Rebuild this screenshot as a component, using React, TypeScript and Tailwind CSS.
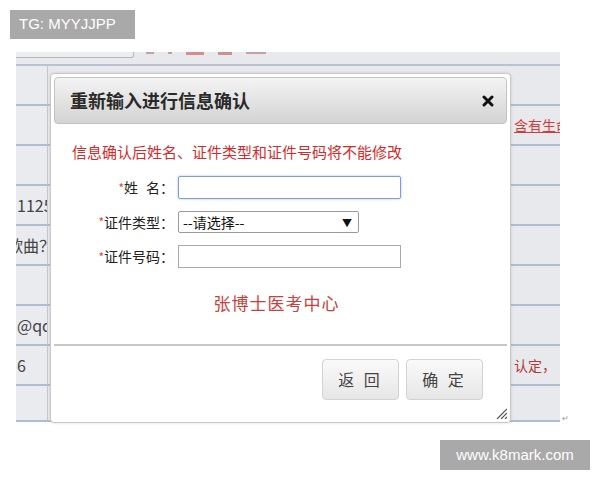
import React from "react";

const font = { fontFamily: '"Noto Sans CJK SC", "Liberation Sans", sans-serif' };

type Row = { h: string; left?: string; leftShift?: boolean; right?: string; rightLink?: boolean };

const rows: Row[] = [
  { h: "h-[40px]" },
  { h: "h-[40px]", right: "含有生命", rightLink: true },
  { h: "h-[40px]" },
  { h: "h-[40px]", left: "11253" },
  { h: "h-[40px]", left: "歌曲？", leftShift: true },
  { h: "h-[40px]" },
  { h: "h-[40px]", left: "@qq" },
  { h: "h-[40px]", left: "6", right: "认定，" },
  { h: "h-[36px]" },
];

function BackgroundSheet() {
  return (
    <div className="flex flex-col bg-[#e7e9ed]">
      {/* cropped row above the table */}
      <div className="flex h-[14px] border-b-2 border-[#b9c3d0]">
        <div className="h-[6px] w-[118px] rounded-br-[3px] border-b border-r border-[#b8b8b8] bg-[#eceef1]" />
        <div className="ml-[12px] flex gap-[14px]">
          <span className="h-[2px] w-[8px] bg-[#c9a0a0]" />
          <span className="h-[2px] w-[4px] bg-[#c9a0a0]" />
          <span className="h-[3px] w-[18px] bg-[#d88c8c]" />
          <span className="h-[3px] w-[14px] bg-[#d08f8f]" />
          <span className="h-[2px] w-[20px] bg-[#c9a0a0]" />
        </div>
      </div>
      {rows.map((r, i) => (
        <div key={i} className={`flex ${r.h} border-b-2 border-[#aebdd0]`}>
          <div className="flex w-[32px] items-center overflow-hidden whitespace-nowrap border-r border-[#c4c8ce] bg-[#eaebee] text-[16px] text-[#444]" style={font}>
            {r.left && <span className={r.leftShift ? "ml-[-9px]" : "ml-[1px]"}>{r.left}</span>}
          </div>
          <div className="flex-1" />
          <div className="flex w-[47px] items-center overflow-hidden whitespace-nowrap pl-[1px] text-[14px] text-[#b2393b]" style={font}>
            {r.right && <span className={r.rightLink ? "underline text-[#d43b3b]" : ""}>{r.right}</span>}
          </div>
        </div>
      ))}
    </div>
  );
}

function Label({ children }: { children: React.ReactNode }) {
  return (
    <div className="flex items-center justify-end text-[14px] text-[#222]" style={font}>
      <span className="text-[12px] text-[#e23b3b]">*</span>
      {children}
      <span>：</span>
    </div>
  );
}

function Dialog() {
  return (
    <div className="absolute left-[34px] top-[21px] flex h-[350px] w-[461px] flex-col rounded-[4px] border border-[#c9c9c9] bg-white p-[3px] shadow-[0_0_3px_rgba(0,0,0,0.15)]">
      <div className="flex h-[47px] items-center justify-between rounded-[4px] border border-[#c2c2c2] bg-gradient-to-b from-[#f4f4f4] to-[#d3d3d3] pl-[15px] pr-[12px]">
        <span className="text-[18px] font-bold text-[#2a2a2a]" style={font}>重新输入进行信息确认</span>
        <svg width="12" height="12" viewBox="0 0 12 12">
          <path d="M2 2 L10 10 M10 2 L2 10" stroke="#111" strokeWidth="3" strokeLinecap="round" />
        </svg>
      </div>

      <div className="pl-[18px] pt-[18px] text-[15px] leading-[19px] text-[#d42a2a]" style={font}>
        信息确认后姓名、证件类型和证件号码将不能修改
      </div>

      <div className="mt-[15px] grid grid-cols-[120px_1fr] gap-x-[4px] gap-y-[12px]">
        <Label>
          <span>姓</span>
          <span className="ml-[8px]">名</span>
        </Label>
        <div className="h-[23px] w-[223px] rounded-[2px] border border-[#7f9fd3] shadow-[0_0_2px_rgba(80,120,200,0.6)]" />
        <Label>
          <span>证件类型</span>
        </Label>
        <div className="flex h-[22px] w-[181px] items-center justify-between rounded-[2px] border border-[#9a9a9a] pl-[4px] pr-[6px] text-[14px] text-[#111]" style={font}>
          <span>--请选择--</span>
          <span className="text-[10px]">▼</span>
        </div>
        <Label>
          <span>证件号码</span>
        </Label>
        <div className="h-[23px] w-[223px] border border-[#a9a9a9]" />
      </div>

      <div className="mt-[22px] pr-[8px] text-center text-[17px] text-[#c8413e]" style={font}>
        <span className="tracking-[1px]">张博士医考中心</span>
      </div>

      <div className="mt-[28px] border-t-2 border-[#c6c6c6]" />

      <div className="flex justify-end gap-[7px] pr-[24px] pt-[13px]">
        {["返 回", "确 定"].map((t) => (
          <button
            key={t}
            className="h-[41px] w-[77px] rounded-[4px] border border-[#d3d3d3] bg-gradient-to-b from-[#fafafa] to-[#e6e6e6] text-[16px] tracking-[3px] text-[#444]"
            style={font}
          >
            {t}
          </button>
        ))}
      </div>

      <div className="flex flex-1 items-end justify-end">
        <svg width="12" height="12" viewBox="0 0 12 12">
          <path d="M2 12 L12 2 M6 12 L12 6 M10 12 L12 10" stroke="#555" strokeWidth="1.2" />
        </svg>
      </div>
    </div>
  );
}

export default function App() {
  return (
    <div className="relative h-[480px] w-[600px] overflow-hidden bg-white">
      <div className="pl-[16px] pt-[52px]">
        <div className="relative w-[544px]">
          <BackgroundSheet />
          <Dialog />
          <span className="absolute bottom-[-2px] right-[-9px] text-[8px] text-[#999]">↵</span>
        </div>
      </div>

      <div className="absolute left-[10px] top-[10px] flex h-[29px] w-[125px] items-center pl-[9px] text-[15px] text-white bg-[#a9a9a9]" style={{ fontFamily: '"Liberation Sans", Arial, sans-serif' }}>
        TG: MYYJJPP
      </div>
      <div className="absolute left-[440px] top-[440px] flex h-[30px] w-[150px] items-center justify-center text-[15px] text-white bg-[#a9a9a9]" style={{ fontFamily: '"Liberation Sans", Arial, sans-serif' }}>
        www.k8mark.com
      </div>
    </div>
  );
}
